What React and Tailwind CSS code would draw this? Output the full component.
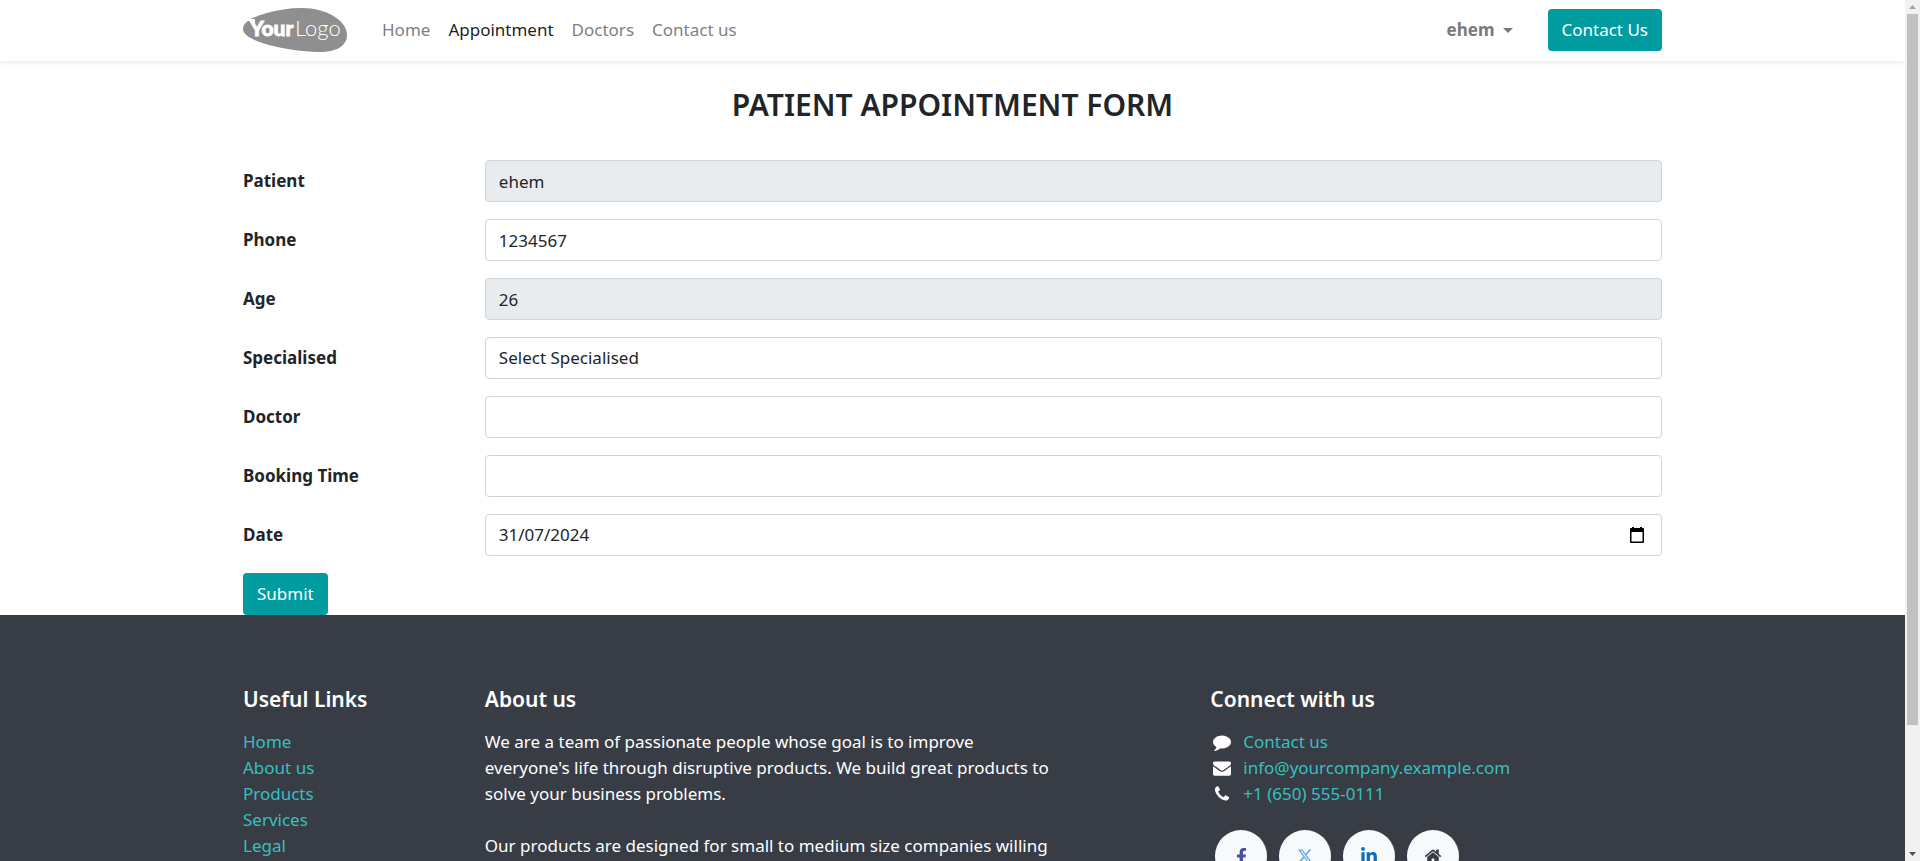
import { FaFacebookF, FaLinkedinIn } from "react-icons/fa";
import { FaXTwitter } from "react-icons/fa6";

const navLinks = ["Home", "Appointment", "Doctors", "Contact us"];
const usefulLinks = ["Home", "About us", "Products", "Services", "Legal", "Privacy Policy"];

const commentPath =
  "M1792 896q0 174-120 321.5t-326 233-450 85.5q-70 0-145-8-198 175-460 242-49 14-114 22-17 2-30.5-9t-17.5-29v-1q-3-4-.5-12t2-10 4.5-9.5l6-9 7-8.5 8-9q7-8 31-34.5t34.5-38 31-39.5 32.5-51 27-59 26-76q-157-89-247.5-220t-90.5-281q0-130 71-248.5t191-204.5 286-136.5 348-50.5q244 0 450 85.5t326 233 120 321.5z";
const envelopePath =
  "M1792 710v794q0 66-47 113t-113 47h-1472q-66 0-113-47t-47-113v-794q44 49 101 87 362 246 497 345 57 42 92.5 65.5t94.5 48 110 24.5h2q51 0 110-24.5t94.5-48 92.5-65.5q170-123 498-345 57-39 100-87zm0-294q0 79-49 151t-122 123q-376 261-468 325-10 7-42.5 31t-54 38.5-52 32.5-57.5 27-50 9h-2q-23 0-50-9t-57.5-27-52-32.5-54-38.5-42.5-31q-91-64-262-182.5t-205-142.5q-62-42-117-115.5t-55-136.5q0-78 41.5-130t118.5-52h1472q65 0 112.5 47t47.5 113z";
const phonePath =
  "M1600 1240q0 27-10 70.5t-21 68.5q-21 50-122 106-94 51-186 51-27 0-52.5-3.5t-57.5-12.5-47.5-14.5-55.5-20.5-49-18q-98-35-175-83-128-79-264.5-215.5t-215.5-264.5q-48-77-83-175-3-9-18-49t-20.5-55.5-14.5-47.5-12.5-57.5-3.5-52.5q0-92 51-186 56-101 106-122 25-11 68.5-21t70.5-10q14 0 21 3 18 6 53 76 11 19 30 54t35 63.5 31 53.5q3 4 17.5 25t21.5 35.5 7 28.5q0 20-28.5 50t-62 55-62 53-28.5 46q0 9 5 22.5t8.5 20.5 14 24 11.5 19q76 137 174 235t235 174q2 1 19 11.5t24 14 20.5 8.5 22.5 5q18 0 46-28.5t53-62 55-62 50-28.5q14 0 28.5 7t35.5 21.5 25 17.5q25 15 53.5 31t63.5 35 54 30q70 35 76 53 3 7 3 21z";
const homePath =
  "M1472 992v480q0 26-19 45t-45 19h-384v-384h-256v384h-384q-26 0-45-19t-19-45v-480q0-1 .5-3t.5-3l575-474 575 474q1 2 1 6zm223-69l-62 74q-8 9-21 11h-3q-13 0-21-7l-692-577-692 577q-12 8-24 7-13-2-21-11l-62-74q-8-10-7-23.5t11-21.5l719-599q32-26 76-26t76 26l244 204v-195q0-14 9-23t23-9h192q14 0 23 9t9 23v408l219 182q10 8 11 21.5t-7 23.5z";

const control =
  "h-[42px] w-full appearance-none rounded-[4px] border border-[#ced4da] px-[13px] text-[#212529] outline-none";

function Glyph({ d, className }) {
  return (
    <svg viewBox="0 0 1792 1792" fill="currentColor" className={className} aria-hidden="true">
      <path d={d} />
    </svg>
  );
}

function Logo() {
  return (
    <svg width="104" height="44" viewBox="0 0 104 44" role="img" aria-label="YourLogo">
      <path
        d="M0 21C0 14 10 9 22 5.500C34 2 46 0 59 0C84 0 104 13 104 27C104 38 93 44 77 44C52 44 0 35 0 21Z"
        fill="#8f8f8f"
      />
      <path d="M4 11H12V15H7V13H4Z" fill="#fff" />
      <text
        x="7"
        y="28"
        fill="#fff"
        stroke="#fff"
        strokeWidth="0.8"
        fontFamily="Lato, sans-serif"
        fontSize="21"
        fontWeight="900"
      >
        Your
      </text>
      <text x="52" y="28" fill="#fff" fontFamily="Lato, sans-serif" fontSize="22" fontWeight="300">
        Logo
      </text>
    </svg>
  );
}

function Field({ id, label, children }) {
  return (
    <div className="grid grid-cols-6 items-center gap-x-8">
      <label htmlFor={id} className="font-bold">
        {label}
      </label>
      <div className="col-span-5">{children}</div>
    </div>
  );
}

function Header() {
  return (
    <header className="relative bg-white pb-px shadow-[0_2px_4px_rgba(0,0,0,0.08)]">
      <div className="mx-auto flex h-[60px] max-w-[1451px] items-center px-4">
        <a href="#home" className="mr-[35px]">
          <Logo />
        </a>
        <nav className="flex gap-[18px]">
          {navLinks.map((name) => (
            <a
              key={name}
              href="#nav"
              className={name === "Appointment" ? "text-black/90" : "text-[#7f7f7f]"}
            >
              {name}
            </a>
          ))}
        </nav>
        <button type="button" className="ml-auto flex items-center gap-2 font-bold text-[#7a7a7a]">
          ehem
          <svg width="10" height="5" viewBox="0 0 10 5" fill="currentColor" aria-hidden="true">
            <path d="M0 0H10L5 5Z" />
          </svg>
        </button>
        <a
          href="#contact"
          className="ml-[35px] flex h-[42px] items-center rounded-[4px] bg-[#009c9f] px-[14px] text-white"
        >
          Contact Us
        </a>
      </div>
    </header>
  );
}

function AppointmentForm() {
  return (
    <main className="mx-auto max-w-[1451px] px-4 pt-6">
      <h1 className="text-center text-[30px] leading-[40px] font-semibold">
        PATIENT APPOINTMENT FORM
      </h1>
      <form className="mt-[35px] flex flex-col gap-[17px]">
        <Field id="patient" label="Patient">
          <input id="patient" readOnly defaultValue="ehem" className={`${control} bg-[#e9ecef]`} />
        </Field>
        <Field id="phone" label="Phone">
          <input id="phone" type="tel" defaultValue="1234567" className={`${control} bg-white`} />
        </Field>
        <Field id="age" label="Age">
          <input id="age" readOnly defaultValue="26" className={`${control} bg-[#e9ecef]`} />
        </Field>
        <Field id="specialised" label="Specialised">
          <select id="specialised" className={`${control} bg-white`}>
            <option>Select Specialised</option>
          </select>
        </Field>
        <Field id="doctor" label="Doctor">
          <select id="doctor" className={`${control} bg-white`} />
        </Field>
        <Field id="booking" label="Booking Time">
          <select id="booking" className={`${control} bg-white`} />
        </Field>
        <Field id="date" label="Date">
          <div className="flex h-[42px] items-center rounded-[4px] border border-[#ced4da] bg-white pr-4 pl-[13px]">
            <input id="date" defaultValue="31/07/2024" className="min-w-0 flex-1 outline-none" />
            <button type="button" aria-label="Open calendar" className="text-black">
              <svg width="16" height="18" viewBox="0 0 16 18" fill="currentColor" aria-hidden="true">
                <path d="M3 1h2v1h6V1h2v1h1q1 0 1 1v13q0 1-1 1H2q-1 0-1-1V3q0-1 1-1h1zM2.500 6v9.500h11V6z" />
              </svg>
            </button>
          </div>
        </Field>
        <button
          type="button"
          className="h-[42px] self-start rounded-[4px] bg-[#009c9f] px-[14px] text-white"
        >
          Submit
        </button>
      </form>
    </main>
  );
}

function ContactRow({ path, text }) {
  return (
    <li className="flex items-center gap-3">
      <Glyph d={path} className="size-[18px]" />
      <a href="#contact" className="text-[#35c0c0]">
        {text}
      </a>
    </li>
  );
}

function Social({ label, className, children }) {
  return (
    <a
      href="#social"
      aria-label={label}
      className={`flex size-[52px] items-center justify-center rounded-full bg-[#f8f9fa] ${className}`}
    >
      {children}
    </a>
  );
}

function Footer() {
  const heading = "mb-[17px] text-[21px] leading-[26px] font-semibold";
  return (
    <footer className="bg-[#383c45] text-white">
      <div className="mx-auto grid max-w-[1451px] grid-cols-12 gap-x-8 px-4 pt-[71px] pb-16">
        <section className="col-span-2">
          <h2 className={heading}>Useful Links</h2>
          <ul className="text-[#35c0c0]">
            {usefulLinks.map((name) => (
              <li key={name}>
                <a href="#link">{name}</a>
              </li>
            ))}
          </ul>
        </section>
        <section className="col-span-5">
          <h2 className={heading}>About us</h2>
          <p className="mb-[26px]">
            We are a team of passionate people whose goal is to improve
            <br />
            everyone's life through disruptive products. We build great products to solve your
            business problems.
          </p>
          <p>
            Our products are designed for small to medium size companies willing
            <br />
            to optimize their performance.
          </p>
        </section>
        <section className="col-span-4 col-start-9">
          <h2 className={heading}>Connect with us</h2>
          <ul className="pl-[3px]">
            <ContactRow path={commentPath} text="Contact us" />
            <ContactRow path={envelopePath} text="info@yourcompany.example.com" />
            <ContactRow path={phonePath} text="+1 (650) 555-0111" />
          </ul>
          <div className="mt-[23px] ml-[5px] flex gap-3">
            <Social label="Facebook" className="text-[#4a4fa5]">
              <FaFacebookF size={17} />
            </Social>
            <Social label="X" className="text-[#64a8f0]">
              <FaXTwitter size={16} />
            </Social>
            <Social label="LinkedIn" className="text-[#0a6fc2]">
              <FaLinkedinIn size={18} />
            </Social>
            <Social label="Website" className="text-[#383c45]">
              <Glyph d={homePath} className="size-[18px]" />
            </Social>
          </div>
        </section>
      </div>
    </footer>
  );
}

function ScrollRail() {
  return (
    <div aria-hidden="true" className="flex w-[15px] shrink-0 flex-col items-center bg-[#f1f1f1]">
      <svg width="15" height="14" viewBox="0 0 15 14" fill="#a3a3a3">
        <path d="M4 9H11L7.500 5Z" />
      </svg>
      <div className="flex w-[11px] flex-1 flex-col">
        <div className="flex-[47] bg-[#c1c1c1]" />
        <div className="flex-[8]" />
      </div>
      <svg width="15" height="15" viewBox="0 0 15 15" fill="#505050">
        <path d="M4 6H11L7.500 10Z" />
      </svg>
    </div>
  );
}

export default function App() {
  return (
    <div className="flex h-screen bg-white font-['Noto_Sans',sans-serif] text-[17px] leading-[26px] text-[#212529]">
      <div className="min-w-0 flex-1 overflow-y-auto [scrollbar-width:none]">
        <Header />
        <AppointmentForm />
        <Footer />
      </div>
      <ScrollRail />
    </div>
  );
}
